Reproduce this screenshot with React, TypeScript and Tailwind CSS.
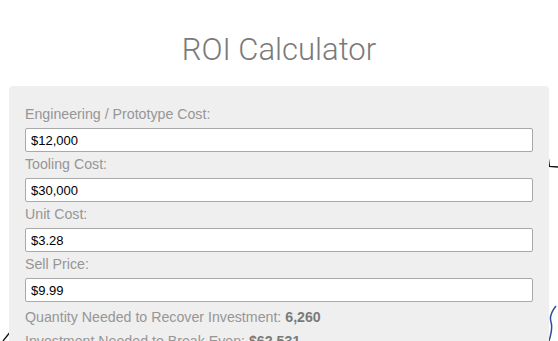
import React from "react";

const fields = [
  { label: "Engineering / Prototype Cost:", value: "$12,000" },
  { label: "Tooling Cost:", value: "$30,000" },
  { label: "Unit Cost:", value: "$3.28" },
  { label: "Sell Price:", value: "$9.99" },
];

export default function App() {
  return (
    <div className="relative h-[341px] w-[558px] overflow-hidden bg-white font-['Liberation_Sans',Arial,sans-serif]">
      <svg className="absolute left-0 top-0" width="558" height="341" viewBox="0 0 558 341" fill="none">
        <path d="M548.5 159 L549.5 166.5 L558 167" stroke="#111" strokeWidth="1.3" />
        <path d="M556 306 C552 311 549 316 551 322 C553 328 551 334 549 341" stroke="#2b4f9c" strokeWidth="1.5" />
        <path d="M3 341 L11 331" stroke="#111" strokeWidth="1.3" />
      </svg>
      <div className="relative flex flex-col">
        <h1 className="pt-[30px] text-center font-['Roboto',sans-serif] text-[31px] font-light leading-[40px] text-[#7a7a7a]">
          ROI Calculator
        </h1>
        <div className="mx-[9px] mt-[16px] rounded-[4px] bg-[#efefef] px-[16px] pt-[16px] pb-4">
          {fields.map((f) => (
            <div key={f.label} className="flex flex-col">
              <label className="text-[14.2px] leading-[24px] text-[#969696]">{f.label}</label>
              <input
                readOnly
                value={f.value}
                className="mt-[2px] h-[24px] w-full rounded-[2px] border border-[#a9a9a9] bg-white px-[5px] text-[13px] text-black outline-none"
              />
            </div>
          ))}
          <div className="mt-[3px] text-[14.2px] leading-[24px] text-[#969696]">
            Quantity Needed to Recover Investment: <b className="text-[#7a7a7a]">6,260</b>
          </div>
          <div className="text-[14.2px] leading-[24px] text-[#969696]">
            Investment Needed to Break Even: <b className="text-[#7a7a7a]">$62,531</b>
          </div>
        </div>
      </div>
    </div>
  );
}
